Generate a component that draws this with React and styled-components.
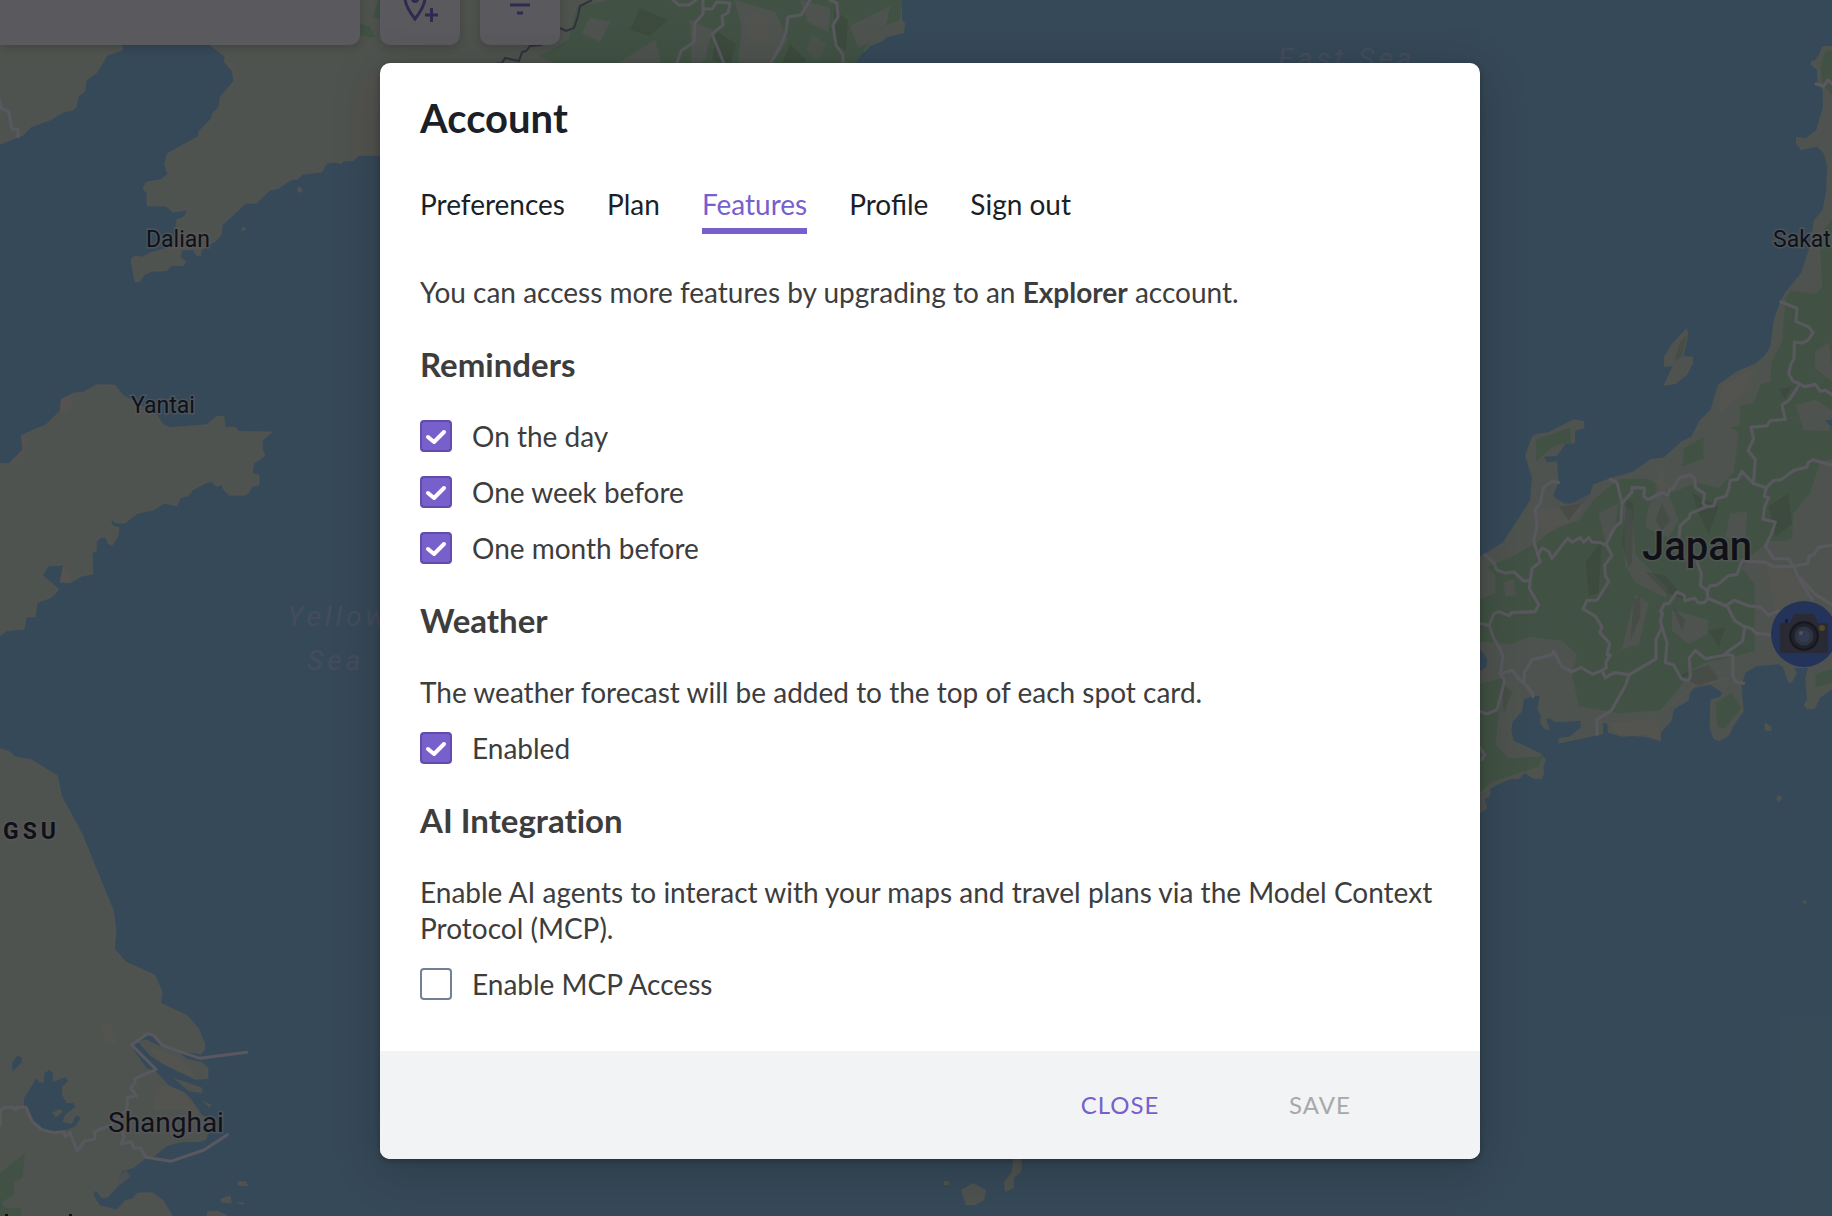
import React, { useState } from "react";
import styled, { createGlobalStyle } from "styled-components";

const GlobalStyle = createGlobalStyle`
  * {
    box-sizing: border-box;
  }

  body {
    margin: 0;
    background: #374a58;
    color: #3d3d3d;
    font-family: Lato, "Liberation Sans", sans-serif;
    font-size: 28px;
    line-height: 36px;
  }

  button,
  input {
    font: inherit;
  }
`;

const Page = styled.div`
  position: relative;
  min-height: 100vh;
  overflow: hidden;
`;

const MapCanvas = styled.svg`
  position: absolute;
  top: 0;
  left: 0;
  width: 100%;
  height: 100%;
  background: #8bcae9;
`;

const MapLabel = styled.text`
  font-family: Roboto, "Liberation Sans", sans-serif;
  font-size: ${({ $size }) => $size || 23}px;
  font-weight: ${({ $weight }) => $weight || 400};
  letter-spacing: ${({ $spaced }) => ($spaced ? 4 : 0)}px;
  fill: #0a0f14;
  stroke: rgba(255, 255, 255, 0.6);
  stroke-width: 3px;
  paint-order: stroke;
`;

const SeaLabel = styled(MapLabel)`
  font-style: italic;
  fill: #bdd3fb;
  stroke: none;
`;

const Toolbar = styled.div`
  position: absolute;
  top: -35px;
  left: 0;
  display: flex;
  gap: 20px;
`;

const SearchBox = styled.input`
  width: 360px;
  height: 80px;
  padding: 0 24px;
  border: 0;
  border-radius: 0 10px 10px 0;
  background: #ffffff;
  box-shadow: 0 2px 12px rgba(0, 0, 0, 0.25);
`;

const ToolButton = styled.button`
  display: grid;
  place-items: center;
  width: 80px;
  height: 80px;
  padding: 0;
  border: 0;
  border-radius: 10px;
  background: #ffffff;
  color: #7860cf;
  box-shadow: 0 2px 12px rgba(0, 0, 0, 0.25);
`;

const Overlay = styled.div`
  position: relative;
  display: flex;
  justify-content: center;
  align-items: flex-start;
  min-height: 100vh;
  padding: 63px 0 57px 28px;
  background: rgba(19, 19, 26, 0.7);
`;

const Dialog = styled.section`
  width: 100%;
  max-width: 1100px;
  border-radius: 10px;
  background: #ffffff;
  overflow: hidden;
  box-shadow: 0 2px 6px rgba(0, 0, 0, 0.25), 0 10px 50px rgba(0, 0, 0, 0.2);
`;

const DialogBody = styled.div`
  padding: 31px 40px 49px;
`;

const Title = styled.h1`
  margin: 0 0 44px;
  color: #1b1f27;
  font-size: 40px;
  line-height: 48px;
`;

const Tabs = styled.nav`
  display: flex;
  gap: 42px;
  margin-bottom: 40px;
`;

const Tab = styled.button`
  padding: 0 0 6px;
  border: 0;
  border-bottom: 6px solid ${({ $active }) => ($active ? "#775fcc" : "transparent")};
  background: none;
  color: ${({ $active }) => ($active ? "#775fcc" : "#1b1f27")};
  cursor: pointer;
`;

const Content = styled.div`
  display: flex;
  flex-direction: column;
  gap: 34px;
`;

const Group = styled.div`
  display: flex;
  flex-direction: column;
  gap: 20px;
`;

const Heading = styled.h2`
  margin: 0;
  font-size: 33px;
  line-height: 40px;
  font-variant-ligatures: none;
`;

const Text = styled.p`
  margin: 0;
`;

const CheckRow = styled.label`
  display: flex;
  align-items: center;
  gap: 20px;
  cursor: pointer;
`;

const CheckHolder = styled.span`
  display: grid;

  > * {
    grid-area: 1 / 1;
  }
`;

const CheckInput = styled.input`
  appearance: none;
  width: 32px;
  height: 32px;
  margin: 0;
  border: 2px solid #718096;
  border-radius: 4px;
  background: #ffffff;

  &:checked {
    border-color: #5f4cab;
    background: #775fcc;
  }
`;

const CheckMark = styled.svg`
  width: 32px;
  height: 32px;
  pointer-events: none;
`;

const Footer = styled.footer`
  display: flex;
  justify-content: flex-end;
  gap: 40px;
  padding: 24px 80px;
  background: #f1f3f5;
`;

const FooterButton = styled.button`
  width: 160px;
  height: 60px;
  padding: 0;
  border: 0;
  background: none;
  color: #775fcc;
  font-size: 24px;
  letter-spacing: 1px;
  text-transform: uppercase;
  cursor: pointer;

  &:disabled {
    color: #a8a8a8;
    cursor: default;
  }
`;

const LAND = "#deeccb";
const SAND = "#f2e8d2";
const GREEN = "#b0e8a8";
const WATER = "#8bcae9";
const BORDER = "#fbfbff";

const lineProps = {
  fill: "none",
  stroke: BORDER,
  strokeWidth: 9,
  strokeLinejoin: "round",
  strokeLinecap: "round",
};

function NorthChina() {
  return (
    <g transform={`scale(${1 / 3})`}>
      <g fill={LAND} stroke={SAND} strokeWidth="2">
        <path d="M0 0H365V135L368 150 322 166 290 218 259 240 254 273 235 290 228 322 218 330 188 337 155 358 92 381 70 406 0 432Z" />
        <path d="M630 0V135L675 170 673 185 697 214 702 242 661 291 657 322 637 340 635 355 597 394 596 409 502 461 494 495 504 523 482 539 438 547 429 566 441 580 441 617 499 618 518 636 562 630 558 643 545 655 531 658 527 690 520 740 455 757 425 772 408 767 393 778 405 845 419 845 432 824 455 814 500 812 514 797 550 797 557 785 541 772 545 750 580 750 590 767 602 767 603 750 648 722 665 702 666 676 738 609 768 610 810 571 835 565 870 541 895 536 905 523 965 516 980 490 1000 486 1025 491 1030 483 1060 482 1077 466 1180 466V0Z" />
        <path d="M892 565l6-4 8 6-2 8-8 2zM724 692l6-10 8 6z" />
      </g>
      <path fill={SAND} d="M1060 482L1064 300 1100 230 1180 200V466H1077ZM675 185L705 190 718 230 702 242 697 214Z" opacity="0.5" />
      <path fill={GREEN} d="M1080 72L1110 78 1125 112 1080 108ZM1118 55L1135 0H1145V55Z" />
      <path {...lineProps} d="M0 302L3 325 26 335 36 387 54 388 54 410" />
    </g>
  );
}

function Shandong() {
  return (
    <g transform={`translate(0 370) scale(${1 / 3})`}>
      <path
        fill={LAND}
        stroke={SAND}
        strokeWidth="2"
        d="M-6 281L27 281 69 239 64 196 138 164 181 122 184 88 222 69 250 67 290 44 345 45 370 77 395 90 470 135 490 164 512 173 620 164 652 138 672 140 675 172 706 172 717 185 816 186 788 210 786 235 795 257 762 280 756 311 777 316 777 344 755 350 747 367 734 376 688 376 669 356 668 344 648 349 638 336 625 336 578 359 565 377 540 384 531 408 492 399 462 419 413 430 375 459 348 459 331 445 337 467 357 473 354 498 337 526 326 522 318 503 301 503 289 516 289 542 276 550 279 612 245 618 210 638 180 636 191 585 145 588 127 616 174 656 172 665 150 684 112 697 105 741 79 740 72 777 20 782 -6 803Z"
      />
      <path fill={SAND} d="M184 88L215 75 218 110 195 128 181 122ZM191 585L210 625 205 638 180 636ZM64 196L85 210 72 245 40 278 27 281 69 239Z" />
    </g>
  );
}

function Jiangsu() {
  return (
    <g transform={`translate(0 740) scale(${1 / 3})`}>
      <g fill={LAND} stroke={SAND} strokeWidth="2">
        <path d="M-6 24L28 35 47 51 95 60 172 107 186 172 245 280 290 390 340 512 348 572 343 626 377 666 464 705 486 755 482 790 560 826 595 865 614 912 614 930 602 942 545 932 488 917 462 887 443 881 395 915 440 985 465 992 508 1037 545 1050 570 1075 605 1125 640 1150 622 1185 618 1198 600 1205 545 1205 500 1217 460 1250 435 1255 402 1282 370 1291 352 1312 348 1345 322 1372 304 1372 288 1349 278 1363 298 1397 350 1410 376 1382 398 1376 412 1359 457 1358 490 1382 520 1434H-6Z" />
        <path d="M415 905L440 900 480 920 540 940 560 958 605 967 624 985 624 1015 585 1018 490 972 450 945Z" />
        <path d="M520 1014L606 1045 606 1058 565 1052ZM610 1085L633 1095 628 1100ZM715 1325L738 1326 743 1337 715 1336ZM662 1378L690 1368 694 1388 664 1386ZM622 1415L650 1413 680 1425 670 1434 622 1434ZM712 1388l18 1-2 4z" />
      </g>
      <path fill={SAND} d="M470 1040L508 1037 545 1050 600 1125 560 1110 460 1110ZM305 845L330 855 352 900 340 915 315 905ZM450 925L540 950 585 1010 490 972ZM352 1312L380 1290 390 1310 348 1345Z" opacity="0.7" />
      <path fill={GREEN} d="M0 1300L75 1238 68 1315 42 1325 42 1365 8 1385 10 1400 35 1405 65 1405 60 1434H0Z" />
      <g fill={WATER}>
        <path d="M110 1013L118 1028 132 1026 133 1000 147 990 158 997 158 1025 195 1012 205 1023 186 1040 187 1067 200 1089 222 1090 225 1102 195 1125 188 1145 215 1152 228 1126 243 1134 225 1160 200 1170 160 1176 125 1168 97 1145 80 1105 72 1100 72 1075Z" />
        <path d="M36 970L52 946 66 953 64 968 38 996Z" />
        <path d="M395 922L408 912 440 942 500 980 535 1012 575 1060 605 1060 612 1120 590 1095 560 1060 508 1037 465 992 440 985Z" />
      </g>
      <path fill={LAND} d="M156 1118L180 1107 188 1115 168 1131ZM520 1014L606 1045 606 1058 565 1052Z" />
      <path {...lineProps} d="M0 1155L2 1110 15 1102 38 1102 45 1110 52 1102 78 1102 97 1145 125 1168 160 1178 192 1175 195 1190 210 1178 232 1233 254 1202 284 1198 284 1175 330 1156 380 1110 382 1073 410 1067 392 1045 405 1030 405 1016 468 988 395 915 443 881 462 887 488 917 600 955 740 937" />
      <path {...lineProps} d="M362 1156L372 1190 363 1212 395 1205 400 1223 422 1224 438 1252 512 1264 612 1230 682 1184" />
      <path fill="#0a0f14" d="M15 1422h9v12h-9zM207 1422h9v12h-9z" />
    </g>
  );
}

function Korea() {
  return (
    <g>
      <path fill={LAND} d="M380 0H902V20L905 23 904 33 887 37 883 41 870 46 865 52 858 52 850 72H380Z" />
      <path fill={GREEN} d="M577 7L608 0H902L900 20 883 27 868 44 850 72H570L540 56 568 40Z" />
      <path fill={LAND} d="M590 18L610 22 600 42 582 33ZM620 62L655 40 662 68H615ZM735 0L775 12 788 40 768 68 738 62 742 28ZM800 0L830 8 828 32 808 22ZM850 26L890 6 884 34 858 48ZM690 20L712 30 705 60 692 68Z" />
      <path fill={SAND} d="M752 12L770 20 764 46 748 36ZM812 34L826 44 818 62 806 50Z" opacity="0.5" />
      <path fill="#6f8f62" opacity="0.28" d="M640 8L668 20 650 36 630 30ZM716 30L736 44 730 66 712 60ZM790 44L806 60 800 68H780ZM834 10L848 20 846 50 834 44Z" />
      <g {...lineProps} strokeWidth="3">
        <path d="M673 0L679 5 689 5 696 0M703 0V14L695 23 694 42 681 51 676 66M703 9H712L717 2 730 3 728 13 722 16 723 25 712 34 725 66M810 0L801 15 788 17 786 32 780 47 769 66M830 0L837 3 838 17 833 25 836 45 843 55V66" />
      </g>
      <path d="M592 0L580 6 578 16 574 28 566 31 560 28M542 45L530 46 526 51 522 52 519 61 505 58 502 63 495 64" fill="none" stroke="#7d7d96" strokeWidth="2" />
    </g>
  );
}

function Honshu() {
  return (
    <g>
      <g transform={`translate(1432 0) scale(${1 / 3})`}>
        <path fill={LAND} d="M1206 138L1172 138 1160 165 1150 180 1137 183 1137 195 1155 210 1157 250 1172 270 1173 320 1153 390 1122 415 1092 410 1092 430 1107 450 1155 440 1175 460 1186 500 1182 580 1172 630 1145 662 1140 700 1130 750 1108 818 1060 877 1045 905H1206Z" />
        <path fill={GREEN} d="M1206 150L1180 152 1165 200 1170 250 1206 295ZM1206 650L1175 690 1165 760 1170 860 1150 882 1075 872 1055 905H1206Z" />
        <path {...lineProps} d="M1152 252L1175 258 1188 240 1204 254" />
      </g>
      <g transform={`translate(1432 300) scale(${1 / 3} ${1 / 2.904})`}>
        <g fill={LAND}>
          <path d="M1206 0L1047 0 1025 60 1015 135 1000 160 972 184 912 208 858 247 836 318 803 350 778 397 747 412 695 458 656 462 605 498 535 518 483 536 472 573 457 591 398 591 372 577 363 565 380 530 375 468 345 472 336 455 375 452 400 418 428 416 430 380 457 372 456 352 425 346 348 385 318 388 301 396 279 452 300 515 294 583 212 705 120 760 120 1500 144 1490 166 1476 158 1450 174 1440 175 1420 195 1408 235 1392 262 1390 278 1374 305 1390 330 1390 336 1375 334 1355 342 1335 325 1316 245 1280 238 1250 242 1225 270 1195 275 1160 300 1150 323 1150 316 1190 326 1205 325 1230 340 1247 353 1248 342 1218 352 1214 370 1226 446 1222 446 1242 412 1268 380 1272 380 1288 512 1260 514 1228 526 1230 528 1256 570 1268 635 1264 686 1283 687 1256 717 1225 726 1188 770 1163 775 1140 788 1123 835 1117 870 1140 865 1152 835 1160 833 1245 845 1275 862 1281 892 1264 905 1235 935 1195 928 1120 940 1082 975 1063 1040 1058 1052 1065 1070 1112 1080 1110 1095 1083 1085 1068 1128 1068 1120 1100 1125 1160 1115 1175 1125 1188 1148 1188 1165 1155 1206 1125Z" />
          <path d="M764 82L769 100 754 163 783 165 782 185 765 218 730 244 694 249 722 192 696 194 696 165 722 125Z" />
          <path d="M998 1226L1018 1240 1018 1252 998 1250ZM1038 1438L1052 1445 1042 1458 1033 1450ZM1112 1748l8-6 5 8-7 5z" />
        </g>
        <g fill={GREEN}>
          <path d="M1060 0L1050 120 1018 180 1016 235 985 245 965 300 925 305 922 365 893 370 920 385 905 500 860 545 790 530 720 560 650 520 560 520 485 580 440 640 370 660 320 700 240 745 165 775 190 800 190 850 120 880V990L240 1000 290 978 390 990 435 1030 420 1090 440 1180 560 1200 685 1192 740 1130 775 1075 830 1050 905 1035 968 1020V825L930 780 950 750 1010 700 1060 700 1080 690 1085 620 1135 560 1165 470 1206 460V0Z" />
          <path d="M312 405L415 370 418 415 375 420 345 440 312 470ZM755 430L815 398 815 462 750 484Z" />
          <path d="M120 1120L200 1100 215 1100 190 1290 230 1330 335 1325 320 1355 180 1400 120 1450Z" />
          <path d="M850 1170L900 1140 928 1185 880 1245 855 1240ZM1150 1085L1206 1070V1110L1150 1125Z" />
        </g>
        <g fill={LAND}>
          <path d="M500 620L560 590 548 660 520 700ZM575 600L600 610 610 740 710 840 700 865 610 820 580 770ZM610 855L650 880 620 1000 570 1015ZM720 900L830 930 825 970 770 1000 720 960ZM895 620L945 615 940 690 880 690Z" />
          <path d="M1150 150L1190 125 1206 240 1150 200ZM1092 305L1150 290 1206 325 1190 380 1115 378ZM215 820L245 812 250 857 220 862ZM650 600L690 520 740 640 710 690 640 660Z" />
        </g>
        <g fill={SAND} opacity="0.6">
          <path d="M300 610L400 600 480 560 430 640 340 680ZM870 250L970 195 930 270 860 330ZM1000 760L1080 790 1140 860 1030 900ZM530 1230L680 1215 685 1275 560 1262ZM700 1190L800 1100 900 1100 780 1130ZM670 540L690 480 700 560Z" />
        </g>
        {/* mountain shading */}
        <g fill="#6f8f62" opacity="0.28">
          <path d="M585 580L605 590 600 760 590 780 570 700ZM605 870L625 860 625 920 595 990ZM690 590L715 640 690 670 670 640ZM380 600L450 590 410 640ZM640 790L700 800 760 870 700 850ZM780 560L860 600 830 680 800 620ZM720 890L760 930 750 960ZM460 760L510 700 500 850 470 860ZM1010 600L1070 560 1080 650 1030 690ZM1040 260L1080 250 1060 290ZM210 1110L240 1140 215 1200ZM830 960L880 950 860 1010ZM740 1090L830 1060 860 1100 800 1120ZM745 120L765 100 750 165 725 180Z" />
        </g>
        <path fill={WATER} d="M120 1005L144 1015 166 1040 164 1065 144 1078H120ZM1178 350L1206 345V375Z" />
        <g {...lineProps}>
          <path d="M1046 5L1095 24 1092 62 1130 78 1143 94 1130 115 1112 125 1087 122 1086 172 1077 185 1070 214 1083 236 1100 242 1117 252 1150 245 1165 265 1180 262 1200 275" />
          <path d="M1102 245L1072 290 1050 305 1060 347 1015 350 1005 365 957 370 965 403 948 437 970 463 964 533 1003 545 1025 524 1047 522 1085 495 1125 485 1128 472 1142 464 1200 480" />
          <path d="M964 533L930 498 917 521 895 523 890 548 882 570 853 577 845 598 822 600 813 590 818 563 790 545 788 518 775 508 742 516 722 548 712 550 708 566 688 560 648 580 635 570 638 546 600 544 600 558 570 590" />
          <path d="M535 520L555 530 570 590 567 645 550 658 522 708 540 742 518 770 520 800 530 818 495 872 465 873 453 897 490 918 510 950 503 965 533 997 525 1030 535 1032 522 1050 523 1068 510 1075 520 1097 545 1082 592 1088 580 1120 538 1192 495 1218 495 1262" />
          <path d="M380 530L362 526 335 543 325 590 310 608 315 655 305 700 318 740 325 760 300 780 292 838 320 885 310 905 238 908 232 917 200 905 185 912 172 945 186 985 200 1005 213 1035 205 1085 218 1105 195 1190 165 1202 144 1195M140 938L172 945" />
          <path d="M318 740L330 720 350 730 360 750 407 692 420 703 445 690 455 703 470 690 480 703 505 705 522 712M158 740L185 762 195 785 220 793 247 790 275 816 292 815" />
          <path d="M205 1085L240 1075 268 1108 275 1110 278 1080 300 1045 360 1030 365 1020 390 1065 420 1080 447 1067 482 1087 512 1075M272 1108L300 1140 303 1152M144 1300L158 1320 150 1335" />
          <path d="M592 1088L672 1042 672 985 690 950 685 930 692 910 685 905 697 882 710 882 735 848 757 858 758 873 788 866 800 880 818 878 828 866 825 845 835 830 855 828 890 800 915 797 930 757 1000 762 1025 775 1085 773 1100 808 1140 870" />
          <path d="M690 950L705 995 700 1053 725 1060 748 1100 768 1105 775 1095 772 1040 790 1018 820 1042 882 1030 902 1032 902 1090 912 1110 935 1113" />
          <path d="M828 866L880 888 907 872 950 888 985 892 1010 915 1040 902M886 890L907 930 938 950 932 990 882 1025M938 948L960 955 972 968 1015 972" />
          <path d="M825 600L775 620 772 632 745 655 740 700M795 760L808 795 805 830 828 845M1105 808L1150 855 1200 885" />
          <path d="M1003 545L997 570 1010 575 998 600 993 637 1030 645 1018 680 1000 715 1025 750 1070 752 1085 773 1128 765 1130 745 1145 740 1160 718 1200 712" />
        </g>
      </g>
    </g>
  );
}

function CameraPin() {
  return (
    <g>
      <circle cx="1804" cy="634" r="33" fill="#4a80ee" />
      <path fill="#3f4048" d="M1785 619h3v5h-3z" />
      <path fill="#626372" d="M1782 623H1790L1793 616Q1794 614 1796 614H1812Q1814 614 1815 616L1818 623H1826Q1828 623 1828 625V651Q1828 653 1826 653H1782Q1780 653 1780 651V625Q1780 623 1782 623Z" />
      <circle cx="1804" cy="636" r="15" fill="#22252e" />
      <circle cx="1804" cy="636" r="11" fill="#7484a0" stroke="#414758" strokeWidth="3" />
      <circle cx="1804" cy="636" r="6" fill="#7d9bd4" />
      <circle cx="1801" cy="633" r="2" fill="#dfe9f8" />
      <circle cx="1804" cy="634" r="1" fill="#e05a6a" />
      <circle cx="1822" cy="628" r="3" fill="#e5c34a" />
    </g>
  );
}

function WorldMap() {
  return (
    <MapCanvas viewBox="0 0 1832 1216" preserveAspectRatio="xMidYMid slice" aria-label="Map">
      <NorthChina />
      <Shandong />
      <Jiangsu />
      <Korea />
      <Honshu />
      <path
        fill={LAND}
        d="M1013 1159H1022L1021 1172 1014 1178V1188L1005 1192 1004 1182 1012 1172ZM973 1183L986 1190 984 1200 975 1205H966L961 1190ZM944 1181h5v4h-5z"
      />
      <MapLabel x="146" y="247">Dalian</MapLabel>
      <MapLabel x="131" y="413">Yantai</MapLabel>
      <MapLabel x="3" y="839" $weight="700" $spaced>GSU</MapLabel>
      <MapLabel x="108" y="1132" $size="28">Shanghai</MapLabel>
      <MapLabel x="1773" y="247">Sakata</MapLabel>
      <MapLabel x="1642" y="560" $size="40" $weight="500">Japan</MapLabel>
      <SeaLabel x="287" y="626" $size="28" $spaced>Yellow</SeaLabel>
      <SeaLabel x="307" y="670" $size="28" $spaced>Sea</SeaLabel>
      <SeaLabel x="1278" y="68" $size="28" $spaced>East Sea</SeaLabel>
      <CameraPin />
    </MapCanvas>
  );
}

function AddPlaceIcon() {
  return (
    <svg width="80" height="80" viewBox="0 0 80 80" fill="none" stroke="currentColor" strokeWidth="3">
      <path d="M35 54Q25 41 25 33A10 10 0 0 1 45 33Q45 41 35 54Z" />
      <circle cx="35" cy="34" r="4" fill="currentColor" stroke="none" />
      <path d="M45 50H58M51.500 43V57" />
    </svg>
  );
}

function FilterIcon() {
  return (
    <svg width="80" height="80" viewBox="0 0 80 80" fill="none" stroke="currentColor" strokeWidth="3">
      <path d="M24 32H56M30 40H50M37 48H43" />
    </svg>
  );
}

function Checkbox({ label, checked, onChange }) {
  return (
    <CheckRow>
      <CheckHolder>
        <CheckInput type="checkbox" checked={checked} onChange={onChange} />
        {checked && (
          <CheckMark viewBox="0 0 32 32" fill="none" stroke="#ffffff" strokeWidth="4" strokeLinecap="round" strokeLinejoin="round">
            <path d="M8 17L14 22 24 12" />
          </CheckMark>
        )}
      </CheckHolder>
      {label}
    </CheckRow>
  );
}

const tabs = ["Preferences", "Plan", "Features", "Profile", "Sign out"];

function AccountDialog() {
  const [activeTab, setActiveTab] = useState("Features");
  const [features, setFeatures] = useState({
    day: true,
    week: true,
    month: true,
    weather: true,
    mcp: false,
  });

  const toggle = (key) => () => {
    setFeatures({ ...features, [key]: !features[key] });
  };

  return (
    <Dialog role="dialog" aria-labelledby="account-title">
      <DialogBody>
        <Title id="account-title">Account</Title>
        <Tabs>
          {tabs.map((tab) => (
            <Tab key={tab} type="button" $active={tab === activeTab} onClick={() => setActiveTab(tab)}>
              {tab}
            </Tab>
          ))}
        </Tabs>
        <Content>
          <Text>
            You can access more features by upgrading to an <strong>Explorer</strong> account.
          </Text>
          <Heading>Reminders</Heading>
          <Group>
            <Checkbox label="On the day" checked={features.day} onChange={toggle("day")} />
            <Checkbox label="One week before" checked={features.week} onChange={toggle("week")} />
            <Checkbox label="One month before" checked={features.month} onChange={toggle("month")} />
          </Group>
          <Heading>Weather</Heading>
          <Group>
            <Text>The weather forecast will be added to the top of each spot card.</Text>
            <Checkbox label="Enabled" checked={features.weather} onChange={toggle("weather")} />
          </Group>
          <Heading>AI Integration</Heading>
          <Group>
            <Text>
              Enable AI agents to interact with your maps and travel plans via the Model Context Protocol (MCP).
            </Text>
            <Checkbox label="Enable MCP Access" checked={features.mcp} onChange={toggle("mcp")} />
          </Group>
        </Content>
      </DialogBody>
      <Footer>
        <FooterButton type="button">Close</FooterButton>
        <FooterButton type="button" disabled>Save</FooterButton>
      </Footer>
    </Dialog>
  );
}

function App() {
  return (
    <Page>
      <GlobalStyle />
      <WorldMap />
      <Toolbar>
        <SearchBox type="search" aria-label="Search places" />
        <ToolButton type="button" aria-label="Add place">
          <AddPlaceIcon />
        </ToolButton>
        <ToolButton type="button" aria-label="Filter">
          <FilterIcon />
        </ToolButton>
      </Toolbar>
      <Overlay>
        <AccountDialog />
      </Overlay>
    </Page>
  );
}

export default App;
